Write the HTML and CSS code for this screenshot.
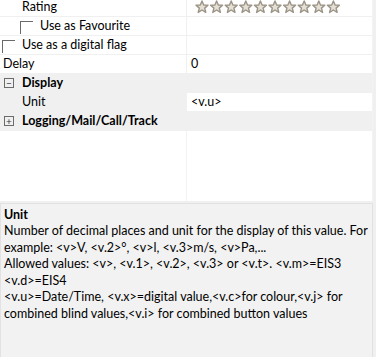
FILE: index.html
```html
<!DOCTYPE html>
<html lang="en">
<head>
    <meta charset="UTF-8">
    <title>Properties</title>
    <link rel="stylesheet" href="styles.css">
</head>
<body>

    <div class="grid">
        <div class="row white first">
            <div class="label indent">Rating</div>
            <div class="value stars">
                <svg width="150" height="14" viewBox="0 0 150 14">
                    <defs>
                        <path id="star" d="M7 1 L8.7 5.1 L13 5.3 L9.7 8.1 L10.8 12.4 L7 10 L3.2 12.4 L4.3 8.1 L1 5.3 L5.3 5.1 Z" fill="#e4e0d6" stroke="#9b9486" stroke-width="1.4" stroke-linejoin="round"/>
                    </defs>
                    <use href="#star" x="0"/>
                    <use href="#star" x="14.6"/>
                    <use href="#star" x="29.2"/>
                    <use href="#star" x="43.8"/>
                    <use href="#star" x="58.4"/>
                    <use href="#star" x="73"/>
                    <use href="#star" x="87.6"/>
                    <use href="#star" x="102.2"/>
                    <use href="#star" x="116.8"/>
                    <use href="#star" x="131.4"/>
                </svg>
            </div>
        </div>
        <div class="row white">
            <div class="label sub"><span class="check"></span>Use as Favourite</div>
            <div class="value"></div>
        </div>
        <div class="row white">
            <div class="label top"><span class="check"></span>Use as a digital flag</div>
            <div class="value"></div>
        </div>
        <div class="row white">
            <div class="label plain">Delay</div>
            <div class="value">0</div>
        </div>
        <div class="row grey">
            <div class="label group"><span class="toggle">&minus;</span>Display</div>
        </div>
        <div class="row grey">
            <div class="label indent">Unit</div>
            <div class="value">&lt;v.u&gt;</div>
        </div>
        <div class="row grey">
            <div class="label group"><span class="toggle">+</span>Logging/Mail/Call/Track</div>
        </div>
        <div class="empty">
            <div class="empty-left"></div>
            <div class="empty-right"></div>
        </div>
    </div>

    <div class="help">
        <div class="help-title">Unit</div>
        <p>Number of decimal places and unit for the display of this value. For example: &lt;v&gt;V, &lt;v.2&gt;&deg;, &lt;v&gt;l, &lt;v.3&gt;m/s, &lt;v&gt;Pa,...<br>
        Allowed values: &lt;v&gt;, &lt;v.1&gt;, &lt;v.2&gt;, &lt;v.3&gt; or &lt;v.t&gt;. &lt;v.m&gt;=EIS3<br>
        &lt;v.d&gt;=EIS4<br>
        &lt;v.u&gt;=Date/Time, &lt;v.x&gt;=digital value,&lt;v.c&gt;for colour,&lt;v.j&gt; for combined blind values,&lt;v.i&gt; for combined button values</p>
    </div>

</body>
</html>
```

FILE: styles.css
```css
* {
    box-sizing: border-box;
}

body {
    margin: 0;
    width: 376px;
    height: 357px;
    overflow: hidden;
    background-color: #f0f0f0;
    font-family: 'Lato', 'Open Sans', sans-serif;
    font-size: 12.5px;
    color: #000000;
}

.grid {
    width: 373px;
    background-color: #ffffff;
    border-right: 1px solid #f3f3f3;
}

.row {
    display: flex;
    height: 19px;
    border-bottom: 1px solid #f0f0f0;
    line-height: 18px;
}

.row.first {
    margin-top: -2px;
}

.row.grey {
    background-color: #f0f0f0;
}

.label {
    width: 187px;
    border-right: 1px solid #f0f0f0;
    display: flex;
    align-items: center;
    white-space: nowrap;
}

.label.plain {
    padding-left: 3px;
}

.label.indent {
    padding-left: 22px;
}

.label.sub {
    padding-left: 20px;
}

.label.top {
    padding-left: 2px;
}

.label.group {
    padding-left: 4px;
    font-weight: bold;
}

.value {
    flex: 1;
    padding-left: 4px;
    background-color: #ffffff;
}

.value.stars {
    display: flex;
    align-items: center;
    padding-left: 8px;
}

.check {
    width: 13px;
    height: 13px;
    border-top: 1px solid #6a6a6a;
    border-left: 1px solid #6a6a6a;
    margin-right: 7px;
    margin-top: 2px;
}

.toggle {
    width: 10px;
    height: 10px;
    border: 1px solid #6b6b6b;
    margin-right: 8px;
    font-weight: normal;
    font-size: 10px;
    line-height: 8px;
    text-align: center;
    color: #333333;
}

.empty {
    display: flex;
    height: 70px;
}

.empty-left {
    width: 187px;
    border-right: 1px solid #f3f3f3;
}

.help {
    width: 373px;
    height: 160px;
    margin-top: 2px;
    background-color: #f2f2f2;
    border: 1px solid #e2e2e2;
    padding: 3px 0 0 3px;
}

.help-title {
    font-weight: bold;
    line-height: 16px;
}

.help p {
    margin: 0;
    line-height: 16.5px;
}
```
